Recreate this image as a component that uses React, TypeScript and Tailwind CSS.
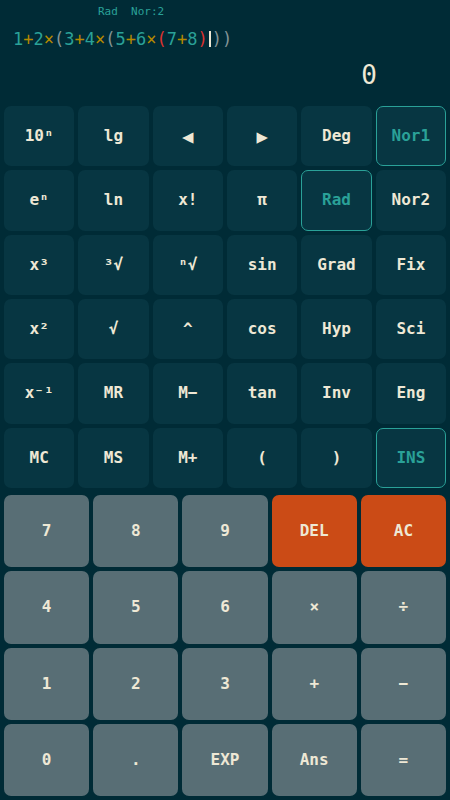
import React from "react";

const topKeys: { label: string; active?: boolean; small?: boolean }[] = [
  { label: "10ⁿ" }, { label: "lg" }, { label: "◀", small: true }, { label: "▶", small: true }, { label: "Deg" }, { label: "Nor1", active: true },
  { label: "eⁿ" }, { label: "ln" }, { label: "x!" }, { label: "π" }, { label: "Rad", active: true }, { label: "Nor2" },
  { label: "x³" }, { label: "³√" }, { label: "ⁿ√" }, { label: "sin" }, { label: "Grad" }, { label: "Fix" },
  { label: "x²" }, { label: "√" }, { label: "^" }, { label: "cos" }, { label: "Hyp" }, { label: "Sci" },
  { label: "x⁻¹" }, { label: "MR" }, { label: "M−" }, { label: "tan" }, { label: "Inv" }, { label: "Eng" },
  { label: "MC" }, { label: "MS" }, { label: "M+" }, { label: "(" }, { label: ")" }, { label: "INS", active: true },
];

const bottomKeys: { label: string; orange?: boolean }[] = [
  { label: "7" }, { label: "8" }, { label: "9" }, { label: "DEL", orange: true }, { label: "AC", orange: true },
  { label: "4" }, { label: "5" }, { label: "6" }, { label: "×" }, { label: "÷" },
  { label: "1" }, { label: "2" }, { label: "3" }, { label: "+" }, { label: "−" },
  { label: "0" }, { label: "." }, { label: "EXP" }, { label: "Ans" }, { label: "=" },
];

const D = "text-[#2aa198]";
const O = "text-[#b58900]";
const P = "text-[#839496]";
const R = "text-[#dc322f]";

const expr: [string, string][] = [
  ["1", D], ["+", O], ["2", D], ["×", O], ["(", P], ["3", D], ["+", O], ["4", D], ["×", O], ["(", P],
  ["5", D], ["+", O], ["6", D], ["×", O], ["(", R], ["7", D], ["+", O], ["8", D], [")", R],
];

export default function App() {
  return (
    <div className="w-[450px] h-[800px] bg-[#002b36] font-['DejaVu_Sans_Mono',monospace] flex flex-col overflow-hidden">
      <div className="h-[102px] relative flex flex-col">
        <div className="h-[24px] pl-[98px] flex items-center text-[11px] text-[#2aa198] whitespace-pre">Rad  Nor:2</div>
        <div className="h-[30px] pl-[13px] flex items-center text-[17px] leading-none whitespace-pre">
          {expr.map(([c, cls], i) => (
            <span key={i} className={cls}>{c}</span>
          ))}
          <span className="inline-block w-[2px] h-[16px] bg-[#eee8d5] mx-[1px]" />
          <span className={P}>))</span>
        </div>
        <div className="h-[42px] flex items-center justify-end pr-[73px] text-[26px] text-[#eee8d5]">0</div>
      </div>
      <div className="pt-1 px-1">
        <div className="grid grid-cols-6 grid-rows-6 gap-1 h-[382px]">
          {topKeys.map((k, i) => (
            <div
              key={i}
              className={
                "rounded-[7px] bg-[#073642] flex items-center justify-center font-bold " +
                (k.active ? "border-[1.5px] border-[#2aa198] text-[#2aa198] " : "text-[#eee8d5] ") +
                (k.small ? "text-[19px] font-normal" : "text-[16px]")
              }
            >
              {k.label}
            </div>
          ))}
        </div>
      </div>
      <div className="pt-[7px] px-1 pb-1">
        <div className="grid grid-cols-5 grid-rows-4 gap-1 h-[301px]">
          {bottomKeys.map((k, i) => (
            <div
              key={i}
              className={
                "rounded-[7px] flex items-center justify-center font-bold text-[16px] text-[#eee8d5] " +
                (k.orange ? "bg-[#cb4b16]" : "bg-[#586e75]")
              }
            >
              {k.label}
            </div>
          ))}
        </div>
      </div>
    </div>
  );
}
